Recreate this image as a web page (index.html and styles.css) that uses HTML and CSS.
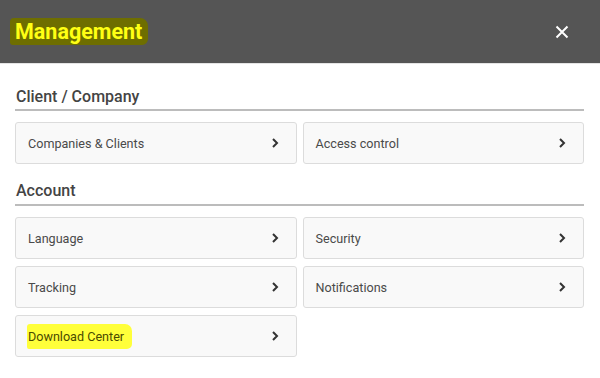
FILE: index.html
```html
<!DOCTYPE html>
<html lang="en">
<head>
  <meta charset="UTF-8">
  <title>Management</title>
  <link rel="stylesheet" href="styles.css">
</head>
<body>
  <div class="modal">
    <div class="modal-header">
      <h1 class="modal-title"><span class="mark-dark">Management</span></h1>
      <button class="close-btn" aria-label="Close">
        <svg width="14" height="14" viewBox="0 0 14 14"><path d="M1.5 1.5l11 11M12.5 1.5l-11 11" stroke="#fff" stroke-width="2" fill="none"/></svg>
      </button>
    </div>
    <div class="modal-body">
      <section class="group">
        <h2 class="group-title">Client / Company</h2>
        <div class="tiles">
          <a class="tile" href="#"><span>Companies &amp; Clients</span><svg class="chev" width="8" height="12" viewBox="0 0 8 12"><path d="M2 2l4 4-4 4" stroke="#333" stroke-width="2" fill="none"/></svg></a>
          <a class="tile" href="#"><span>Access control</span><svg class="chev" width="8" height="12" viewBox="0 0 8 12"><path d="M2 2l4 4-4 4" stroke="#333" stroke-width="2" fill="none"/></svg></a>
        </div>
      </section>
      <section class="group">
        <h2 class="group-title">Account</h2>
        <div class="tiles">
          <a class="tile" href="#"><span>Language</span><svg class="chev" width="8" height="12" viewBox="0 0 8 12"><path d="M2 2l4 4-4 4" stroke="#333" stroke-width="2" fill="none"/></svg></a>
          <a class="tile" href="#"><span>Security</span><svg class="chev" width="8" height="12" viewBox="0 0 8 12"><path d="M2 2l4 4-4 4" stroke="#333" stroke-width="2" fill="none"/></svg></a>
          <a class="tile" href="#"><span>Tracking</span><svg class="chev" width="8" height="12" viewBox="0 0 8 12"><path d="M2 2l4 4-4 4" stroke="#333" stroke-width="2" fill="none"/></svg></a>
          <a class="tile" href="#"><span>Notifications</span><svg class="chev" width="8" height="12" viewBox="0 0 8 12"><path d="M2 2l4 4-4 4" stroke="#333" stroke-width="2" fill="none"/></svg></a>
          <a class="tile" href="#"><span class="mark-light">Download Center</span><svg class="chev" width="8" height="12" viewBox="0 0 8 12"><path d="M2 2l4 4-4 4" stroke="#333" stroke-width="2" fill="none"/></svg></a>
        </div>
      </section>
    </div>
  </div>
</body>
</html>
```

FILE: styles.css
```css
body {
  margin: 0; background: #fff;
  font-family: Roboto, 'Liberation Sans', sans-serif;
}
.modal { width: 600px; }
.modal-header {
  height: 63px; background: #555555;
  border-bottom: 1px solid #e4e4e4;
  display: flex; align-items: center; justify-content: space-between;
  padding: 0 31px 0 16px;
}
.modal-title { margin: 0; font-size: 21.5px; font-weight: 700; color: #ffff14; line-height: 20px; }
.mark-dark {
  background: #6e6e00; padding: 1px 6px 1px 5px; margin-left: -6px;
  border-radius: 4px 8px 6px 3px;
}
.close-btn {
  background: none; border: 0; padding: 0; cursor: pointer;
  width: 14px; height: 14px; display: flex;
}
.modal-body { padding: 0 16px 0 15px; }
.group-title {
  margin: 23px 0 11px; padding: 0 0 2px 1px;
  font-size: 16px; font-weight: 500; line-height: 20px; color: #444;
  border-bottom: 2px solid #bcbcbc;
}
.group + .group .group-title { margin-top: 17px; padding-bottom: 3px; }
.tiles { display: grid; grid-template-columns: 1fr 1fr; gap: 7px 6px; }
.tile {
  height: 42px; box-sizing: border-box;
  display: flex; align-items: center; justify-content: space-between;
  padding: 0 17px 0 12px;
  background: #f9f9f9; border: 1px solid #dcdcdc; border-radius: 3px;
  font-size: 12.6px; color: #4a4a4a; text-decoration: none;
}
.mark-light {
  background: #ffff3a; color: #4a4a00; padding: 5px 8px 5px 1px; margin-left: -1px;
  border-radius: 3px 7px 5px 2px;
}
.chev { display: block; }
```
